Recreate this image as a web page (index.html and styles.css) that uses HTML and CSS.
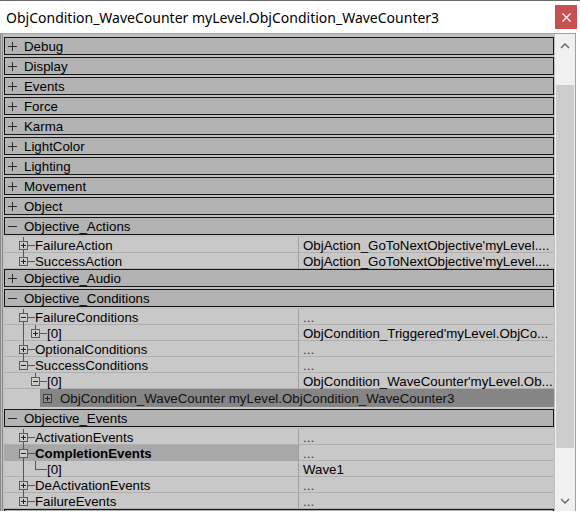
FILE: index.html
```html
<!DOCTYPE html>
<html>
<head>
<meta charset="utf-8">
<link rel="stylesheet" href="styles.css">
</head>
<body>
<div class="title">
  <span class="title-text">ObjCondition_WaveCounter myLevel.ObjCondition_WaveCounter3</span>
  <span class="close"><svg width="9" height="9" viewBox="0 0 9 9"><path d="M0.5 0.5 L8.5 8.5 M8.5 0.5 L0.5 8.5" stroke="#fff" stroke-width="1.2" fill="none"/></svg></span>
</div>
<div class="body">
  <div class="grid">
    <div class="cat"><i class="sign plus"></i><span>Debug</span></div>
    <div class="cat"><i class="sign plus"></i><span>Display</span></div>
    <div class="cat"><i class="sign plus"></i><span>Events</span></div>
    <div class="cat"><i class="sign plus"></i><span>Force</span></div>
    <div class="cat"><i class="sign plus"></i><span>Karma</span></div>
    <div class="cat"><i class="sign plus"></i><span>LightColor</span></div>
    <div class="cat"><i class="sign plus"></i><span>Lighting</span></div>
    <div class="cat"><i class="sign plus"></i><span>Movement</span></div>
    <div class="cat"><i class="sign plus"></i><span>Object</span></div>
    <div class="cat"><i class="sign minus"></i><span>Objective_Actions</span></div>
    <div class="rows">
      <div class="row">
        <div class="name"><i class="g n"><b class="box plus"></b></i><i class="c"></i><span>FailureAction</span></div>
        <div class="val">ObjAction_GoToNextObjective'myLevel....</div>
      </div>
      <div class="row">
        <div class="name"><i class="g n last"><b class="box plus"></b></i><i class="c"></i><span>SuccessAction</span></div>
        <div class="val">ObjAction_GoToNextObjective'myLevel....</div>
      </div>
    </div>
    <div class="cat"><i class="sign plus"></i><span>Objective_Audio</span></div>
    <div class="cat"><i class="sign minus"></i><span>Objective_Conditions</span></div>
    <div class="rows">
      <div class="row">
        <div class="name"><i class="g n"><b class="box minus"></b></i><i class="c"></i><span>FailureConditions</span></div>
        <div class="val dots">...</div>
      </div>
      <div class="row">
        <div class="name"><i class="g v"></i><i class="g n last"><b class="box plus"></b></i><i class="c"></i><span>[0]</span></div>
        <div class="val">ObjCondition_Triggered'myLevel.ObjCo...</div>
      </div>
      <div class="row">
        <div class="name"><i class="g n"><b class="box plus"></b></i><i class="c"></i><span>OptionalConditions</span></div>
        <div class="val dots">...</div>
      </div>
      <div class="row">
        <div class="name"><i class="g n last"><b class="box minus"></b></i><i class="c"></i><span>SuccessConditions</span></div>
        <div class="val dots">...</div>
      </div>
      <div class="row">
        <div class="name"><i class="g"></i><i class="g n last"><b class="box minus"></b></i><i class="c"></i><span>[0]</span></div>
        <div class="val">ObjCondition_WaveCounter'myLevel.Ob...</div>
      </div>
      <div class="sel">
        <div class="sel-in"><b class="box plus"></b><span>ObjCondition_WaveCounter myLevel.ObjCondition_WaveCounter3</span></div>
      </div>
    </div>
    <div class="cat"><i class="sign minus"></i><span>Objective_Events</span></div>
    <div class="rows">
      <div class="row">
        <div class="name"><i class="g n"><b class="box plus"></b></i><i class="c"></i><span>ActivationEvents</span></div>
        <div class="val dots">...</div>
      </div>
      <div class="row bold">
        <div class="name"><i class="g n"><b class="box minus"></b></i><i class="c"></i><span>CompletionEvents</span></div>
        <div class="val dots">...</div>
      </div>
      <div class="row">
        <div class="name"><i class="g v"></i><i class="g e"></i><i class="c"></i><span>[0]</span></div>
        <div class="val">Wave1</div>
      </div>
      <div class="row">
        <div class="name"><i class="g n"><b class="box plus"></b></i><i class="c"></i><span>DeActivationEvents</span></div>
        <div class="val dots">...</div>
      </div>
      <div class="row">
        <div class="name"><i class="g n last"><b class="box plus"></b></i><i class="c"></i><span>FailureEvents</span></div>
        <div class="val dots">...</div>
      </div>
    </div>
    <div class="cat"></div>
  </div>
  <div class="scroll">
    <div class="sb-btn up"><svg width="10" height="6" viewBox="0 0 10 6"><path d="M1 5 L5 1 L9 5" stroke="#606060" stroke-width="1.3" fill="none"/></svg></div>
    <div class="track-top"></div>
    <div class="thumb"></div>
    <div class="track-bot"></div>
    <div class="sb-btn down"><svg width="10" height="6" viewBox="0 0 10 6"><path d="M1 1 L5 5 L9 1" stroke="#606060" stroke-width="1.3" fill="none"/></svg></div>
  </div>
</div>
</body>
</html>
```

FILE: styles.css
```css
* { box-sizing: border-box; }
html, body { margin: 0; padding: 0; }
body {
  width: 580px;
  height: 514px;
  overflow: hidden;
  background: #fff;
  font-family: "Liberation Sans", Arial, sans-serif;
  color: #000;
}
i, b { font-style: normal; display: block; }

.title {
  height: 33px;
  border-top: 1px solid #6b6b6b;
  display: flex;
  align-items: center;
  justify-content: space-between;
  padding: 0 3px 0 6px;
}
.title-text {
  font-family: "Noto Sans", "Open Sans", sans-serif;
  font-size: 14px;
  white-space: nowrap;
}
.close {
  width: 22px;
  height: 24px;
  background: #c75050;
  display: flex;
  align-items: center;
  justify-content: center;
}

.body {
  width: 576px;
  height: 478px;
  border-top: 1px solid #a0a0a0;
  border-left: 3px double #8a8a8a;
  border-right: 1px solid #a0a0a0;
  padding-left: 1px;
  background: #c0c0c0;
  display: flex;
}
.grid {
  width: 551px;
  padding-top: 3px;
  overflow: hidden;
  font-size: 13.3px;
}

.cat {
  width: 550px;
  height: 18px;
  border: 1px solid #161616;
  background: #b3b3b3;
  margin-bottom: 2px;
  display: flex;
  align-items: center;
  padding-left: 3px;
  white-space: nowrap;
}
.sign {
  width: 9px;
  height: 9px;
  flex: none;
  margin-right: 7px;
}
.sign.plus {
  background:
    linear-gradient(#2a2a2a, #2a2a2a) no-repeat 0 4px / 9px 1px,
    linear-gradient(#2a2a2a, #2a2a2a) no-repeat 4px 0 / 1px 9px;
}
.sign.minus {
  background: linear-gradient(#2a2a2a, #2a2a2a) no-repeat 0 4px / 9px 1px;
}

.rows { width: 550px; }
.row {
  display: flex;
  height: 16px;
  background: linear-gradient(to top, #b0b0b0 1px, #c8c8c8 1px);
}
.name {
  width: 295px;
  flex: none;
  border-right: 1px solid #a0a0a0;
  display: flex;
  align-items: center;
  padding-left: 13px;
  white-space: nowrap;
  overflow: hidden;
}
.name span { line-height: 16px; padding-top: 1px; }
.val {
  flex: 1;
  padding: 1px 0 0 4px;
  line-height: 16px;
  white-space: nowrap;
  overflow: hidden;
}
.val.dots { color: #3a3a3a; }
.row.bold .name { background: #a8a8a8; font-weight: bold; }

.g {
  width: 12px;
  height: 16px;
  flex: none;
  position: relative;
}
.g.v {
  background: linear-gradient(#555, #555) no-repeat 6px 0 / 1px 100%;
}
.g.n {
  background:
    linear-gradient(#555, #555) no-repeat 6px 0 / 1px 100%,
    linear-gradient(#555, #555) no-repeat 11px 8px / 1px 1px;
}
.g.n.last {
  background:
    linear-gradient(#555, #555) no-repeat 6px 0 / 1px 8px,
    linear-gradient(#555, #555) no-repeat 11px 8px / 1px 1px;
}
.g.e {
  background:
    linear-gradient(#555, #555) no-repeat 6px 0 / 1px 9px,
    linear-gradient(#555, #555) no-repeat 6px 8px / 6px 1px;
}
.c {
  width: 6px;
  height: 16px;
  flex: none;
  background: linear-gradient(#555, #555) no-repeat 0 8px / 100% 1px;
}
.box {
  position: absolute;
  left: 2px;
  top: 4px;
  width: 9px;
  height: 9px;
  border: 1px solid #5a5a5a;
}
.box.plus {
  background:
    linear-gradient(#222, #222) no-repeat 1px 3px / 5px 1px,
    linear-gradient(#222, #222) no-repeat 3px 1px / 1px 5px,
    #cccccc;
}
.box.minus {
  background:
    linear-gradient(#222, #222) no-repeat 1px 3px / 5px 1px,
    #cccccc;
}

.sel {
  width: 550px;
  height: 20px;
  padding: 0 0 2px 36px;
  background: #c8c8c8;
  display: flex;
}
.sel-in {
  flex: 1;
  background: #858585;
  display: flex;
  align-items: center;
  padding-left: 3px;
  white-space: nowrap;
  color: #111;
}
.sel-in .box {
  position: static;
  flex: none;
  margin-right: 8px;
  border-color: #3c3c3c;
}
.sel-in .box.plus {
  background:
    linear-gradient(#222, #222) no-repeat 1px 3px / 5px 1px,
    linear-gradient(#222, #222) no-repeat 3px 1px / 1px 5px,
    #8f8f8f;
}

.scroll {
  width: 20px;
  background: #f0f0f0;
  display: flex;
  flex-direction: column;
  align-items: center;
}
.sb-btn {
  width: 20px;
  height: 24px;
  flex: none;
  display: flex;
  align-items: center;
  justify-content: center;
}
.sb-btn.down { height: 20px; }
.track-top { height: 27px; flex: none; }
.thumb { width: 18px; height: 363px; flex: none; background: #cdcdcd; }
.track-bot { flex: 1; }
```
